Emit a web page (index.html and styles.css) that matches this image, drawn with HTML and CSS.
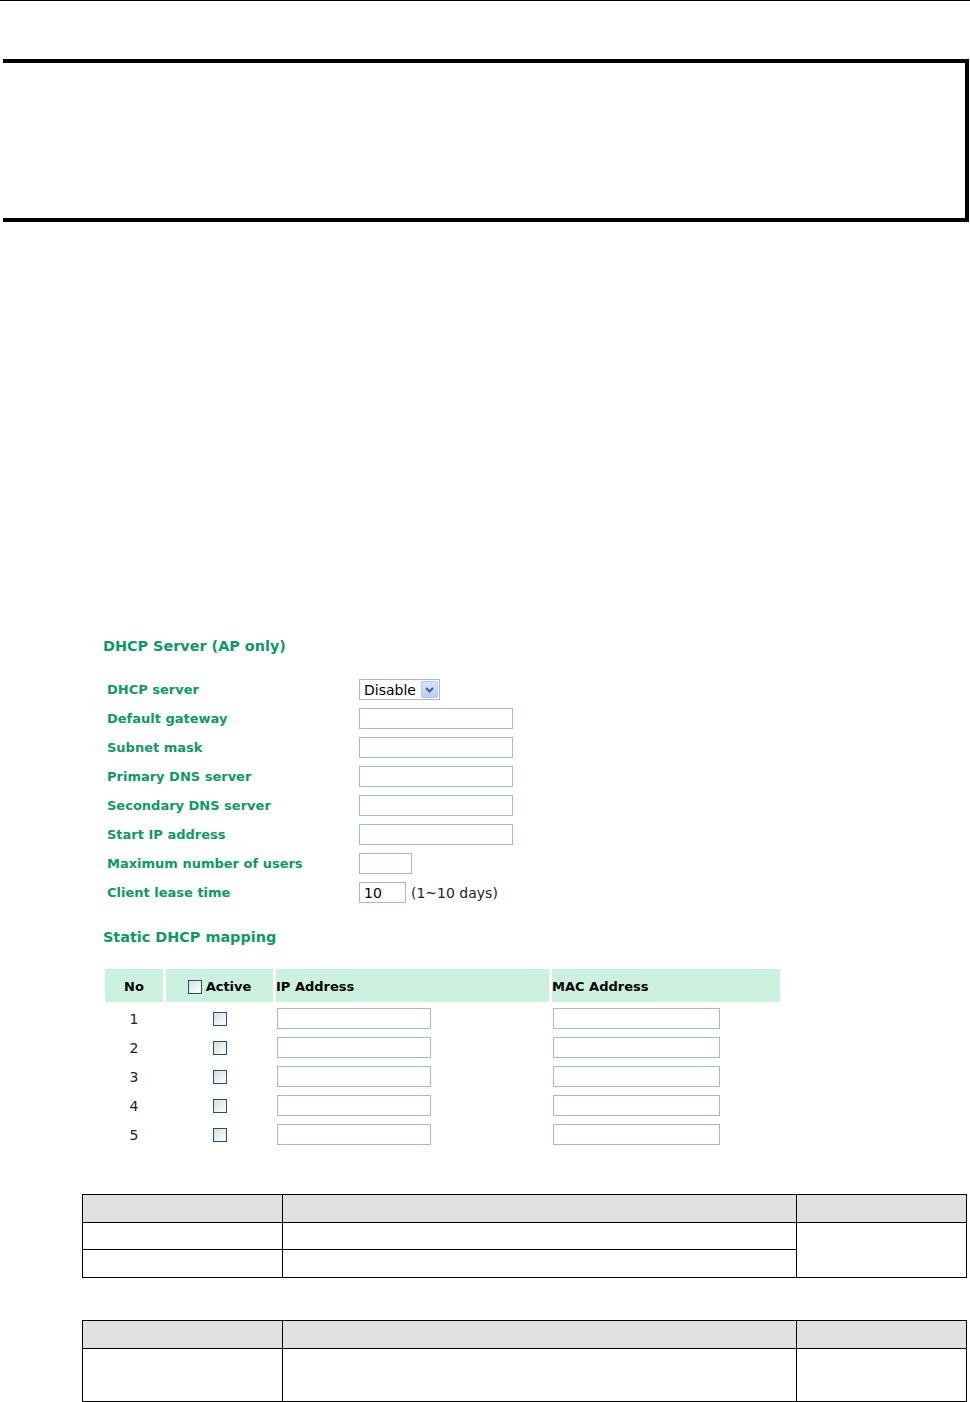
FILE: index.html
```html
<!DOCTYPE html>
<html>
<head>
<meta charset="utf-8">
<title>DHCP Server</title>
<link rel="stylesheet" href="styles.css">
</head>
<body>
<div class="topline"></div>
<div class="box"></div>

<section class="dhcp">
  <h2 class="title">DHCP Server (AP only)</h2>
  <div class="form">
    <div class="row"><span class="label">DHCP server</span>
      <div class="select"><span class="sel-text">Disable</span><span class="sel-btn"><svg width="11" height="8" viewBox="0 0 11 8"><path d="M2 2 L5.5 5.5 L9 2" fill="none" stroke="#4a5f86" stroke-width="2"/></svg></span></div>
    </div>
    <div class="row"><span class="label">Default gateway</span><input class="txt" type="text"></div>
    <div class="row"><span class="label">Subnet mask</span><input class="txt" type="text"></div>
    <div class="row"><span class="label">Primary DNS server</span><input class="txt" type="text"></div>
    <div class="row"><span class="label">Secondary DNS server</span><input class="txt" type="text"></div>
    <div class="row"><span class="label">Start IP address</span><input class="txt" type="text"></div>
    <div class="row"><span class="label">Maximum number of users</span><input class="txt small" type="text"></div>
    <div class="row"><span class="label">Client lease time</span><input class="txt lease" type="text" value="10"><span class="hint">(1~10 days)</span></div>
  </div>

  <h2 class="title title2">Static DHCP mapping</h2>
  <div class="map">
    <div class="mh center">No</div>
    <div class="mh center"><span class="cb"></span>Active</div>
    <div class="mh">IP Address</div>
    <div class="mh">MAC Address</div>

    <div class="mc center">1</div><div class="mc center"><span class="cb"></span></div><div class="mc"><input class="txt ip" type="text"></div><div class="mc"><input class="txt mac" type="text"></div>
    <div class="mc center">2</div><div class="mc center"><span class="cb"></span></div><div class="mc"><input class="txt ip" type="text"></div><div class="mc"><input class="txt mac" type="text"></div>
    <div class="mc center">3</div><div class="mc center"><span class="cb"></span></div><div class="mc"><input class="txt ip" type="text"></div><div class="mc"><input class="txt mac" type="text"></div>
    <div class="mc center">4</div><div class="mc center"><span class="cb"></span></div><div class="mc"><input class="txt ip" type="text"></div><div class="mc"><input class="txt mac" type="text"></div>
    <div class="mc center">5</div><div class="mc center"><span class="cb"></span></div><div class="mc"><input class="txt ip" type="text"></div><div class="mc"><input class="txt mac" type="text"></div>
  </div>
</section>

<table class="spec spec1">
  <tr class="hd"><td class="c1"></td><td class="c2"></td><td class="c3"></td></tr>
  <tr class="r27"><td></td><td></td><td rowspan="2"></td></tr>
  <tr class="r28"><td></td><td></td></tr>
</table>

<table class="spec spec2">
  <tr class="hd"><td class="c1"></td><td class="c2"></td><td class="c3"></td></tr>
  <tr class="r53"><td></td><td></td><td></td></tr>
</table>
</body>
</html>
```

FILE: styles.css
```css
html, body {
  margin: 0;
  padding: 0;
  background: #ffffff;
}

body {
  font-family: "DejaVu Sans", Verdana, sans-serif;
  font-size: 14px;
  color: #000;
  width: 970px;
  height: 1402px;
  overflow: hidden;
}

.topline {
  height: 1px;
  background: #000;
}

.box {
  margin: 58px 1px 0 3px;
  height: 155px;
  border-top: 4px solid #000;
  border-right: 4px solid #000;
  border-bottom: 4px solid #000;
}

.dhcp {
  margin-top: 416px;
  padding-left: 103px;
}

.title {
  margin: 0;
  font-size: 14.4px;
  font-weight: bold;
  line-height: 16px;
  color: #0d9966;
}

.title2 {
  margin-top: 22px;
}

.form {
  margin-top: 21px;
}

.row {
  display: flex;
  align-items: center;
  height: 29px;
}

.label {
  box-sizing: border-box;
  width: 256px;
  padding-left: 4px;
  font-size: 13px;
  font-weight: bold;
  color: #0d9966;
}

.txt {
  box-sizing: border-box;
  width: 154px;
  height: 21px;
  margin: 0;
  padding: 0 4px;
  border: 1px solid #a5b9d1;
  background: #fff;
  font-family: "DejaVu Sans", Verdana, sans-serif;
  font-size: 14px;
  color: #000;
  outline: none;
}

.txt.small { width: 53px; }
.txt.lease { width: 47px; }
.txt.ip { width: 154px; }
.txt.mac { width: 167px; }

.hint {
  margin-left: 5px;
  color: #222;
}

.select {
  box-sizing: border-box;
  display: flex;
  align-items: center;
  width: 81px;
  height: 21px;
  border: 1px solid #a5b9d1;
  padding: 0 1px 0 4px;
}

.sel-text {
  flex: 1;
  color: #000;
}

.sel-btn {
  box-sizing: border-box;
  display: flex;
  align-items: center;
  justify-content: center;
  width: 17px;
  height: 17px;
  background: linear-gradient(#d6e3fd, #b9cdf6);
  border: 1px solid #b7c9ee;
  border-radius: 1px;
}

.map {
  margin-top: 24px;
  margin-left: 2px;
  display: grid;
  grid-template-columns: 58px 107px 273px 228px;
  grid-template-rows: 35px;
  grid-auto-rows: 29px;
  column-gap: 3px;
}

.mh {
  align-self: start;
  height: 33px;
  display: flex;
  align-items: center;
  padding-top: 2px;
  box-sizing: border-box;
  background: #ccf2df;
  font-size: 13px;
  font-weight: bold;
  color: #000;
}

.mc {
  display: flex;
  align-items: center;
  color: #222;
}

.center {
  justify-content: center;
}

.mc .txt {
  margin-left: 1px;
}

.cb {
  box-sizing: border-box;
  display: inline-block;
  width: 14px;
  height: 14px;
  border: 1px solid #1e5182;
  background: linear-gradient(135deg, #dcdcd5, #ffffff);
}

.mh .cb {
  margin-right: 4px;
}

.spec {
  border-collapse: collapse;
  margin-left: 82px;
}

.spec1 { margin-top: 45px; }
.spec2 { margin-top: 42px; }

.spec td {
  border: 1px solid #000;
  padding: 0;
}

.spec .c1 { width: 199px; }
.spec .c2 { width: 513px; }
.spec .c3 { width: 169px; }

.spec .hd td {
  background: #e0e0e0;
  height: 27px;
}

.spec .r27 td { height: 26px; }
.spec .r28 td { height: 27px; }
.spec .r53 td { height: 52px; }
```
